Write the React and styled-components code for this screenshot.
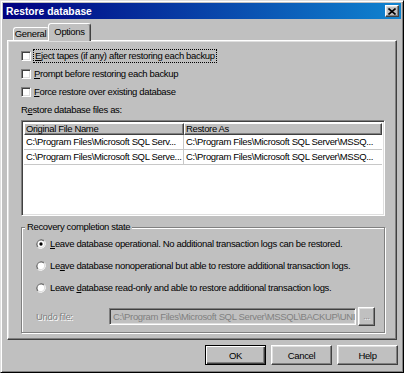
import React from 'react';
import styled, { createGlobalStyle, css } from 'styled-components';

const GlobalStyle = createGlobalStyle`
  html, body { margin: 0; padding: 0; background: #c0c0c0; }
  body {
    font-family: "Liberation Sans", Arial, sans-serif;
    font-size: 9.5px;
    letter-spacing: -0.35px;
    color: #000;
  }
  *, *::before, *::after { box-sizing: border-box; }
`;

const raised = css`
  border: 1px solid;
  border-color: #fff #404040 #404040 #fff;
  box-shadow: inset -1px -1px #808080, inset 1px 1px #dfdfdf;
`;

const sunken = css`
  border: 1px solid;
  border-color: #808080 #fff #fff #808080;
  box-shadow: inset 1px 1px #404040, inset -1px -1px #dfdfdf;
`;

const Window = styled.div`
  width: 404px;
  height: 373px;
  background: #c0c0c0;
  border: 1px solid;
  border-color: #dfdfdf #000 #000 #dfdfdf;
  box-shadow: inset 1px 1px #fff, inset -1px -1px #808080;
  padding: 2px;
  display: flex;
  flex-direction: column;
`;

const TitleBar = styled.div`
  height: 16px;
  flex: none;
  background: linear-gradient(to right, #000080, #1084d0);
  display: flex;
  align-items: center;
  justify-content: space-between;
  padding: 0 2px 0 3px;
  color: #fff;
  font-weight: bold;
  font-size: 10.3px;
  letter-spacing: 0;
`;

const CloseButton = styled.div`
  width: 14px;
  height: 12px;
  background: #c0c0c0;
  ${raised}
  display: flex;
  align-items: center;
  justify-content: center;
`;

const Content = styled.div`
  display: flex;
  flex-direction: column;
  padding: 0 3px 0 4px;
`;

const Tabs = styled.div`
  display: flex;
  align-items: flex-end;
  margin-top: 4px;
  padding-left: 6px;
  height: 17px;
  position: relative;
  z-index: 1;
`;

const Tab = styled.div`
  height: ${p => (p.$active ? 18 : 13)}px;
  margin-bottom: ${p => (p.$active ? -1 : 0)}px;
  margin-left: ${p => (p.$active ? -1 : 0)}px;
  width: ${p => p.$w}px;
  background: #c0c0c0;
  border: 1px solid;
  border-bottom: none;
  border-color: #fff #404040 transparent #fff;
  border-right-width: ${p => (p.$last ? 1 : 0)}px;
  border-radius: 3px 3px 0 0;
  box-shadow: ${p => (p.$last ? 'inset -1px 0 #808080' : 'none')};
  display: flex;
  justify-content: center;
  padding-top: ${p => (p.$active ? 2 : 0)}px;
  padding-right: ${p => (p.$active ? 0 : 2)}px;
  line-height: 11px;
`;

const Panel = styled.div`
  height: 300px;
  margin-right: 1px;
  border: 1px solid;
  border-color: #fff #404040 #404040 #fff;
  box-shadow: inset -1px -1px #808080, inset 1px 1px #dfdfdf;
  display: flex;
  flex-direction: column;
  padding: 6px 11px 0 13px;
`;

const CheckRow = styled.label`
  height: 18px;
  display: flex;
  align-items: center;
  gap: 3px;
`;

const CheckBox = styled.span`
  width: 10px;
  height: 10px;
  background: #fff;
  ${sunken}
  flex: none;
`;

const Text = styled.span`
  white-space: nowrap;
  line-height: 12px;
  ${p => p.$focus && css`
    outline: 1px dotted #000;
    outline-offset: 0;
    padding: 0 1px;
  `}
  ${p => p.$disabled && css`
    color: #808080;
    text-shadow: 1px 1px #fff;
  `}
`;

const U = styled.span`
  text-decoration: underline;
`;

const Caption = styled.div`
  height: 18px;
  display: flex;
  align-items: center;
  margin-bottom: 1px;
`;

const Table = styled.div`
  height: 96px;
  background: #fff;
  ${sunken}
  padding: 2px;
  display: flex;
  flex-direction: column;
`;

const HeaderRow = styled.div`
  display: grid;
  grid-template-columns: 160px 1fr;
  height: 12px;
`;

const HeaderCell = styled.div`
  background: #c0c0c0;
  border: 1px solid;
  border-color: #fff #404040 #404040 #fff;
  box-shadow: inset -1px -1px #808080;
  padding: 0 1px;
  line-height: 9px;
  white-space: nowrap;
  overflow: hidden;
`;

const Row = styled.div`
  display: grid;
  grid-template-columns: 160px 1fr;
  height: 15px;
  border-bottom: 1px solid #c8c8c8;
`;

const Cell = styled.div`
  padding: 0 1px 0 2px;
  line-height: 14px;
  white-space: nowrap;
  overflow: hidden;
  border-right: ${p => (p.$first ? '1px solid #c8c8c8' : 'none')};
`;

const Group = styled.div`
  position: relative;
  margin-top: 11px;
  height: 106px;
  border: 1px solid #808080;
  box-shadow: inset 1px 1px #fff, 1px 1px #fff;
  padding: 5px 0 0 14px;
  display: flex;
  flex-direction: column;
`;

const GroupLabel = styled.span`
  position: absolute;
  top: -7px;
  left: 3px;
  padding: 0 2px;
  background: #c0c0c0;
  line-height: 12px;
`;

const RadioRow = styled.label`
  height: 22px;
  display: flex;
  align-items: center;
  gap: 4px;
`;

const UndoRow = styled.div`
  margin-top: 8px;
  height: 19px;
  display: flex;
  align-items: center;
`;

const UndoLabel = styled.div`
  width: 73px;
`;

const Input = styled.div`
  width: 247px;
  height: 17px;
  background: #c0c0c0;
  ${sunken}
  padding: 0 3px;
  line-height: 15px;
  color: #808080;
  white-space: nowrap;
  overflow: hidden;
`;

const SmallButton = styled.div`
  width: 17px;
  height: 19px;
  margin-left: 2px;
  background: #c0c0c0;
  ${raised}
  display: flex;
  align-items: center;
  justify-content: center;
  color: #808080;
  text-shadow: 1px 1px #fff;
  font-size: 8px;
  letter-spacing: 0;
`;

const ButtonRow = styled.div`
  display: flex;
  justify-content: flex-end;
  gap: 5px;
  margin-top: 5px;
`;

const Button = styled.div`
  width: 61px;
  height: 20px;
  background: #c0c0c0;
  display: flex;
  align-items: center;
  justify-content: center;
  ${p => p.$default
    ? css`
      border: 1px solid #000;
      box-shadow: inset 1px 1px #fff, inset -1px -1px #404040, inset -2px -2px #808080;
    `
    : raised}
`;

function Radio({ checked }) {
  return (
    <svg width="10" height="10" viewBox="0 0 12 12" style={{ flex: 'none' }}>
      <path d="M10.2 1.8 A6 6 0 0 0 1.8 10.2" fill="none" stroke="#808080" strokeWidth="1" />
      <path d="M9.5 2.5 A5 5 0 0 0 2.5 9.5" fill="none" stroke="#404040" strokeWidth="1" />
      <circle cx="6" cy="6" r="4.2" fill="#fff" />
      <path d="M1.8 10.2 A6 6 0 0 0 10.2 1.8" fill="none" stroke="#fff" strokeWidth="1" />
      <path d="M2.5 9.5 A5 5 0 0 0 9.5 2.5" fill="none" stroke="#dfdfdf" strokeWidth="1" />
      {checked && <circle cx="6" cy="6" r="2" fill="#000" />}
    </svg>
  );
}

export default function App() {
  const rows = [
    ['C:\\Program Files\\Microsoft SQL Serv...', 'C:\\Program Files\\Microsoft SQL Server\\MSSQ...'],
    ['C:\\Program Files\\Microsoft SQL Serve...', 'C:\\Program Files\\Microsoft SQL Server\\MSSQ...'],
  ];
  return (
    <>
      <GlobalStyle />
      <Window>
        <TitleBar>
          <span>Restore database</span>
          <CloseButton>
            <svg width="8" height="7" viewBox="0 0 8 7">
              <path d="M0.5 0.5 L7.5 6.5 M7.5 0.5 L0.5 6.5" stroke="#000" strokeWidth="1.6" />
            </svg>
          </CloseButton>
        </TitleBar>
        <Content>
          <Tabs>
            <Tab $w={36}>General</Tab>
            <Tab $w={43} $active $last>Options</Tab>
          </Tabs>
          <Panel>
            <CheckRow>
              <CheckBox />
              <Text $focus><U>E</U>ject tapes (if any) after restoring each backup</Text>
            </CheckRow>
            <CheckRow>
              <CheckBox />
              <Text><U>P</U>rompt before restoring each backup</Text>
            </CheckRow>
            <CheckRow>
              <CheckBox />
              <Text><U>F</U>orce restore over existing database</Text>
            </CheckRow>
            <Caption>
              <Text>R<U>e</U>store database files as:</Text>
            </Caption>
            <Table>
              <HeaderRow>
                <HeaderCell>Original File Name</HeaderCell>
                <HeaderCell>Restore As</HeaderCell>
              </HeaderRow>
              {rows.map((r, i) => (
                <Row key={i}>
                  <Cell $first>{r[0]}</Cell>
                  <Cell>{r[1]}</Cell>
                </Row>
              ))}
            </Table>
            <Group>
              <GroupLabel>Recovery completion state</GroupLabel>
              <RadioRow>
                <Radio checked />
                <Text><U>L</U>eave database operational. No additional transaction logs can be restored.</Text>
              </RadioRow>
              <RadioRow>
                <Radio />
                <Text>Le<U>a</U>ve database nonoperational but able to restore additional transaction logs.</Text>
              </RadioRow>
              <RadioRow>
                <Radio />
                <Text>Leave <U>d</U>atabase read-only and able to restore additional transaction logs.</Text>
              </RadioRow>
              <UndoRow>
                <UndoLabel><Text $disabled>Undo file:</Text></UndoLabel>
                <Input>C:\Program Files\Microsoft SQL Server\MSSQL\BACKUP\UNI</Input>
                <SmallButton>...</SmallButton>
              </UndoRow>
            </Group>
          </Panel>
          <ButtonRow>
            <Button $default>OK</Button>
            <Button>Cancel</Button>
            <Button>Help</Button>
          </ButtonRow>
        </Content>
      </Window>
    </>
  );
}
